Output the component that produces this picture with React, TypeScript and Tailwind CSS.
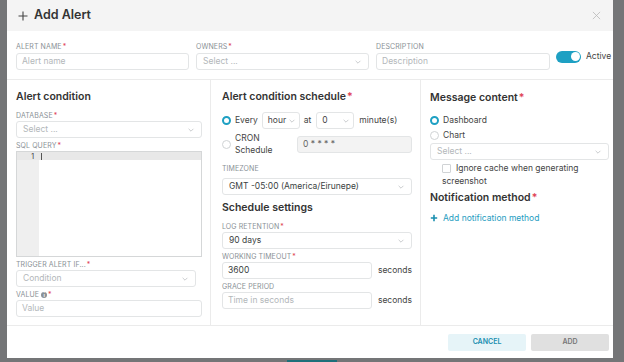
import React from "react";

const Req = () => <span className="text-[#e04355] ml-[1px]">*</span>;

const Label = ({ children, req }: { children: React.ReactNode; req?: boolean }) => (
  <div className="text-[7px] leading-[9px] uppercase text-[#8a9196] tracking-[0.1px]">
    {children}
    {req && <Req />}
  </div>
);

const Chevron = () => (
  <svg width="8" height="8" viewBox="0 0 10 10" className="shrink-0">
    <path d="M2 3.5 L5 6.5 L8 3.5" fill="none" stroke="#b5b9bc" strokeWidth="0.9" />
  </svg>
);

const Select = ({ text, placeholder, className = "" }: { text: string; placeholder?: boolean; className?: string }) => (
  <div
    className={`flex items-center justify-between h-[17px] border border-[#e3e5e6] rounded-[3px] bg-white pl-[6px] pr-[6px] ${className}`}
  >
    <span className={`text-[8.5px] ${placeholder ? "text-[#b3b7ba]" : "text-[#3b3f42]"}`}>{text}</span>
    <Chevron />
  </div>
);

const Input = ({ text, placeholder, className = "" }: { text: string; placeholder?: boolean; className?: string }) => (
  <div className={`flex items-center h-[17px] border border-[#e3e5e6] rounded-[3px] bg-white px-[5px] ${className}`}>
    <span className={`text-[8.5px] ${placeholder ? "text-[#b3b7ba]" : "text-[#3b3f42]"}`}>{text}</span>
  </div>
);

const Radio = ({ on }: { on?: boolean }) =>
  on ? (
    <span className="w-[9px] h-[9px] rounded-full border-[2.5px] border-[#1ea0c3] bg-white shrink-0" />
  ) : (
    <span className="w-[9px] h-[9px] rounded-full border border-[#d0d3d5] bg-white shrink-0" />
  );

const Heading = ({ children, req }: { children: React.ReactNode; req?: boolean }) => (
  <div className="text-[10.5px] font-semibold text-[#333] leading-[13px]">
    {children}
    {req && <Req />}
  </div>
);

export default function App() {
  return (
    <div
      className="w-[624px] h-[362px] bg-[#747577] flex flex-col overflow-hidden"
      style={{ fontFamily: "Inter, 'Noto Sans', sans-serif" }}
    >
      <div className="flex flex-1">
        <div className="w-[7px] shrink-0" />
        <div className="w-[606px] h-[358px] bg-white flex flex-col">
          {/* header */}
          <div className="h-[31px] bg-[#f4f4f4] flex items-center justify-between pl-[11px] pr-[12px]">
            <div className="flex items-center gap-[6px]">
              <svg width="10" height="10" viewBox="0 0 10 10">
                <path d="M5 0.5 V9.5 M0.5 5 H9.5" stroke="#444" strokeWidth="1.1" />
              </svg>
              <span className="text-[12.5px] font-semibold text-[#333]">Add Alert</span>
            </div>
            <svg width="9" height="9" viewBox="0 0 10 10">
              <path d="M1 1 L9 9 M9 1 L1 9" stroke="#b8b8b8" strokeWidth="0.9" />
            </svg>
          </div>

          {/* top row */}
          <div className="flex items-end gap-[7px] pl-[9px] pt-[11px] pb-[9px] border-b border-[#ebebeb]">
            <div className="w-[173px] flex flex-col gap-[2px]">
              <Label req>Alert name</Label>
              <Input text="Alert name" placeholder />
            </div>
            <div className="w-[173px] flex flex-col gap-[2px]">
              <Label req>Owners</Label>
              <Select text="Select ..." placeholder />
            </div>
            <div className="w-[174px] flex flex-col gap-[2px]">
              <Label>Description</Label>
              <Input text="Description" placeholder />
            </div>
            <div className="flex items-center gap-[5px] mb-[7px] ml-[-1px]">
              <span className="w-[25px] h-[12px] rounded-full bg-[#1ea0c3] flex items-center justify-end pr-[1.5px]">
                <span className="w-[9px] h-[9px] rounded-full bg-white" />
              </span>
              <span className="text-[8.5px] text-[#444]">Active</span>
            </div>
          </div>

          {/* columns */}
          <div className="flex h-[246px] border-b border-[#ebebeb]">
            {/* left */}
            <div className="w-[204px] border-r border-[#ebebeb] pl-[9px] pr-[8px] pt-[10px] flex flex-col">
              <Heading>Alert condition</Heading>
              <div className="mt-[8px]">
                <Label req>Database</Label>
              </div>
              <Select text="Select ..." placeholder className="mt-[1px]" />
              <div className="mt-[3px]">
                <Label req>SQL query</Label>
              </div>
              <div className="mt-[1px] h-[106px] border border-[#d5d7d8] flex flex-col relative">
                <div className="absolute left-0 top-0 bottom-0 w-[22px] bg-[#efefef]" />
                <div className="relative h-[8px] bg-[#e8e8e8] flex items-center">
                  <span className="w-[17px] text-right text-[7px] text-[#333] leading-none">1</span>
                  <span className="ml-[7px] w-[1px] h-[7px] bg-[#555]" />
                </div>
              </div>
              <div className="mt-[3px]">
                <Label req>Trigger alert if...</Label>
              </div>
              <Select text="Condition" placeholder className="mt-[1px] w-[180px]" />
              <div className="mt-[3px] flex items-center">
                <Label>Value</Label>
                <span className="ml-[2px] w-[6px] h-[6px] rounded-full bg-[#8a9196] text-white text-[5px] leading-[6px] text-center font-bold">
                  i
                </span>
                <span className="text-[7px] leading-[9px] text-[#e04355] ml-[1px]">*</span>
              </div>
              <Input text="Value" placeholder className="mt-[1px]" />
            </div>

            {/* middle */}
            <div className="w-[210px] border-r border-[#ebebeb] pl-[11px] pr-[8px] pt-[10px] flex flex-col">
              <Heading req>Alert condition schedule</Heading>
              <div className="flex items-center mt-[9px] h-[17px]">
                <Radio on />
                <span className="ml-[4px] text-[8.5px] text-[#444]">Every</span>
                <div className="ml-[4px] w-[38px] h-[17px] border border-[#e3e5e6] rounded-[3px] flex items-center justify-between pl-[5px] pr-[3px]">
                  <span className="text-[8.5px] text-[#444]">hour</span>
                  <Chevron />
                </div>
                <span className="ml-[4px] text-[8.5px] text-[#444]">at</span>
                <div className="ml-[5px] w-[38px] h-[17px] border border-[#e3e5e6] rounded-[3px] flex items-center justify-between pl-[5px] pr-[3px]">
                  <span className="text-[8.5px] text-[#444]">0</span>
                  <Chevron />
                </div>
                <span className="ml-[5px] text-[8.5px] text-[#444]">minute(s)</span>
              </div>
              <div className="flex items-center mt-[3px]">
                <Radio />
                <span className="ml-[4px] text-[8.5px] text-[#444] leading-[12px] w-[50px]">
                  CRON
                  <br />
                  Schedule
                </span>
                <div className="ml-[12px] flex-1 h-[17px] bg-[#f3f3f3] border border-[#e3e5e6] rounded-[3px] flex items-center px-[5px]">
                  <span className="text-[8.5px] text-[#666]">0 * * * *</span>
                </div>
              </div>
              <div className="mt-[8px]">
                <Label>Timezone</Label>
              </div>
              <Select text="GMT -05:00 (America/Eirunepe)" className="mt-[5px]" />
              <div className="mt-[6px]">
                <Heading>Schedule settings</Heading>
              </div>
              <div className="mt-[8px]">
                <Label req>Log retention</Label>
              </div>
              <Select text="90 days" className="mt-[1px]" />
              <div className="mt-[3px]">
                <Label req>Working timeout</Label>
              </div>
              <div className="flex items-center mt-[1px] gap-[6px]">
                <Input text="3600" className="w-[155px]" />
                <span className="text-[8.5px] text-[#444]">seconds</span>
              </div>
              <div className="mt-[3px]">
                <Label>Grace period</Label>
              </div>
              <div className="flex items-center mt-[1px] gap-[6px]">
                <Input text="Time in seconds" placeholder className="w-[155px]" />
                <span className="text-[8.5px] text-[#444]">seconds</span>
              </div>
            </div>

            {/* right */}
            <div className="flex-1 pl-[9px] pr-[4px] pt-[11px] flex flex-col">
              <Heading req>Message content</Heading>
              <div className="flex items-center mt-[11px] h-[10px]">
                <Radio on />
                <span className="ml-[4px] text-[8.5px] text-[#444]">Dashboard</span>
              </div>
              <div className="flex items-center mt-[5px] h-[10px]">
                <Radio />
                <span className="ml-[4px] text-[8.5px] text-[#444]">Chart</span>
              </div>
              <Select text="Select ..." placeholder className="mt-[3px]" />
              <div className="mt-[2px] pl-[12px] flex items-center gap-[5px]">
                <span className="w-[9px] h-[9px] border border-[#d0d3d5] rounded-[1px] bg-white" />
                <span className="text-[8.5px] text-[#444]">Ignore cache when generating</span>
              </div>
              <div className="pl-[12px] text-[8.5px] text-[#444] leading-[12px]">screenshot</div>
              <div className="mt-[4px]">
                <Heading req>Notification method</Heading>
              </div>
              <div className="mt-[8px] flex items-center gap-[5px]">
                <svg width="8" height="8" viewBox="0 0 10 10">
                  <path d="M5 1 V9 M1 5 H9" stroke="#1a8fb0" strokeWidth="2" />
                </svg>
                <span className="text-[8.5px] text-[#1e9dbf]">Add notification method</span>
              </div>
            </div>
          </div>

          {/* footer */}
          <div className="flex-1 flex items-center justify-end gap-[5px] pr-[4px]">
            <div className="w-[78px] h-[17px] rounded-[2px] bg-[#e6f4f8] flex items-center justify-center text-[7px] font-semibold text-[#1a8fb0]">
              CANCEL
            </div>
            <div className="w-[78px] h-[17px] rounded-[2px] bg-[#e0e0e0] flex items-center justify-center text-[7px] font-semibold text-[#777]">
              ADD
            </div>
          </div>
        </div>
        <div className="flex-1" />
      </div>
      <div className="h-[4px] flex">
        <div className="w-[287px]" />
        <div className="w-[50px] h-[2px] mt-[2px] bg-[#1e6f7a]" />
      </div>
    </div>
  );
}
